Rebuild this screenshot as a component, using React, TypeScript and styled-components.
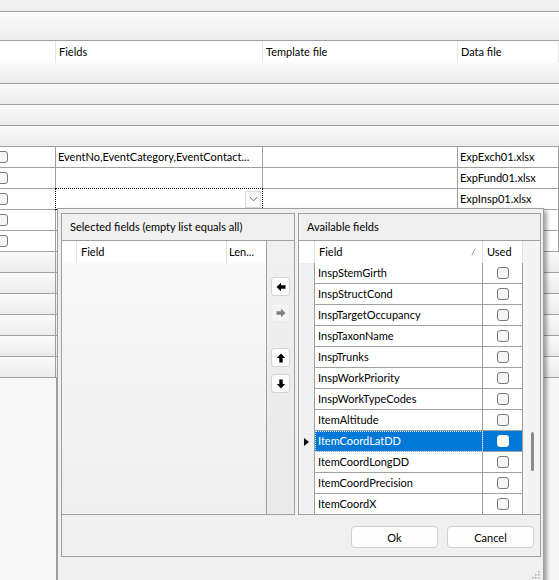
import styled, { createGlobalStyle } from 'styled-components'

const GlobalStyle = createGlobalStyle`
  html, body {
    margin: 0;
    padding: 0;
  }
  body {
    background: #f7f7f7;
    font-family: Lato, 'Segoe UI', 'Liberation Sans', sans-serif;
    font-size: 11px;
    color: #000;
  }
  * {
    box-sizing: border-box;
  }
`

const LINE = '#a0a0a0'

const Page = styled.div`
  position: relative;
  width: 559px;
  height: 580px;
  overflow: hidden;
  display: flex;
  flex-direction: column;
`

const TopBand = styled.div`
  height: 12px;
  flex: none;
  background: #f0f0f0;
  border-bottom: 1px solid ${LINE};
`

const Toolbar = styled.div`
  height: 29px;
  flex: none;
  background: linear-gradient(#fbfbfb, #ededed);
  border-bottom: 1px solid ${LINE};
`

const HeaderRow = styled.div`
  height: 22px;
  flex: none;
  display: flex;
  background: #fff;
`

const HeaderCell = styled.div<{ $w?: number }>`
  width: ${p => (p.$w ? `${p.$w}px` : 'auto')};
  flex: ${p => (p.$w ? 'none' : '1')};
  border-right: 1px solid #e4e4e4;
  padding-left: 3px;
  line-height: 22px;
  white-space: nowrap;
`

const GroupRow = styled.div`
  height: 21px;
  flex: none;
  display: flex;
  background: linear-gradient(#fbfbfb, #ebebeb);
  border-bottom: 1px solid ${LINE};
`

const GroupLead = styled.div`
  width: 56px;
  border-right: 1px solid ${LINE};
`

const DataRow = styled.div`
  height: 21px;
  flex: none;
  display: flex;
  background: #fff;
  border-bottom: 1px solid ${LINE};
`

const Cell = styled.div<{ $w?: number }>`
  width: ${p => (p.$w ? `${p.$w}px` : 'auto')};
  flex: ${p => (p.$w ? 'none' : '1')};
  border-right: 1px solid ${LINE};
  padding-left: 2px;
  line-height: 20px;
  white-space: nowrap;
  overflow: hidden;
  display: flex;
  align-items: center;
`

const CheckCell = styled(Cell)`
  padding-left: 0;
`

const Check = styled.span<{ $on?: boolean }>`
  display: block;
  flex: none;
  width: 12px;
  height: 12px;
  border-radius: 3px;
  border: 1px solid ${p => (p.$on ? '#fff' : '#7a7a7a')};
  background: ${p => (p.$on ? '#fff' : '#f6f6f6')};
`

const LeadCheck = styled(Check)`
  margin-left: -4px;
`

const ComboCell = styled.div`
  width: 208px;
  flex: none;
  border: 1px dotted #000;
  margin: -1px 0 -1px -1px;
  background: #fff;
  display: flex;
  justify-content: flex-end;
  align-items: center;
  padding-right: 1px;
`

const ComboButton = styled.div`
  width: 16px;
  height: 17px;
  border: 1px solid #dcdcdc;
  background: #fafafa;
  display: flex;
  align-items: center;
  justify-content: center;
`

const Filler = styled.div`
  flex: 1;
  display: flex;
`

const FillerLead = styled.div`
  width: 57px;
  border-right: 1px solid ${LINE};
  background: #f8f8f8;
`

/* dropdown editor hanging under the Fields cell */
const Popup = styled.div`
  position: absolute;
  top: 208px;
  left: 57px;
  width: 487px;
  height: 374px;
  background: #f0f0f0;
  border: 1px solid ${LINE};
  box-shadow: 3px 3px 4px rgba(0, 0, 0, 0.35);
  padding: 4px 2px 0 3px;
  display: flex;
  flex-direction: column;
`

const PanelsRow = styled.div`
  height: 302px;
  flex: none;
  display: flex;
  gap: 3px;
`

const Panel = styled.div<{ $w?: number }>`
  width: ${p => (p.$w ? `${p.$w}px` : 'auto')};
  flex: ${p => (p.$w ? 'none' : '1')};
  border: 1px solid ${LINE};
  display: flex;
  flex-direction: column;
  min-width: 0;
`

const PanelTitle = styled.div`
  height: 26px;
  flex: none;
  line-height: 26px;
  padding-left: 8px;
  white-space: nowrap;
`

const PanelBody = styled.div`
  flex: 1;
  display: flex;
  border-top: 1px solid ${LINE};
  overflow: hidden;
`

const SelectedGrid = styled.div`
  width: 205px;
  flex: none;
  border-right: 1px solid ${LINE};
  display: flex;
  flex-direction: column;
  background: linear-gradient(#fafafa, #efefef);
`

const GridHead = styled.div`
  height: 22px;
  flex: none;
  display: flex;
  background: #fff;
`

const GridHeadCell = styled.div<{ $w?: number }>`
  width: ${p => (p.$w ? `${p.$w}px` : 'auto')};
  flex: ${p => (p.$w ? 'none' : '1')};
  border-right: 1px solid #e2e2e2;
  padding-left: 4px;
  line-height: 22px;
  white-space: nowrap;
  display: flex;
  align-items: center;
  justify-content: space-between;
  padding-right: 6px;
`

const LenHeadCell = styled(GridHeadCell)`
  border-right: none;
  padding-left: 2px;
`

const MoveStrip = styled.div`
  flex: 1;
  background: linear-gradient(#f0f0f0, #e9e9e9);
  display: flex;
  flex-direction: column;
  align-items: center;
  padding-top: 36px;
`

const MoveButton = styled.div<{ $off?: boolean; $gap: number }>`
  width: 19px;
  height: 19px;
  margin-bottom: ${p => p.$gap}px;
  border: 1px solid ${p => (p.$off ? '#ebebeb' : '#d3d3d3')};
  border-radius: 3px;
  background: ${p => (p.$off ? '#f4f4f4' : '#fff')};
  display: flex;
  align-items: center;
  justify-content: center;
`

const AvailGrid = styled.div`
  flex: 1;
  display: flex;
`

const AvailRows = styled.div`
  width: 224px;
  flex: none;
  display: flex;
  flex-direction: column;
`

const FieldRow = styled.div`
  height: 21px;
  flex: none;
  display: flex;
`

const RowHead = styled.div<{ $head?: boolean }>`
  width: 16px;
  flex: none;
  border-right: 1px solid ${p => (p.$head ? '#e2e2e2' : LINE)};
  background: ${p => (p.$head ? '#fff' : '#f0f0f0')};
  display: flex;
  align-items: center;
  padding-left: 5px;
`

const Pointer = styled.span`
  width: 0;
  height: 0;
  border-left: 5px solid #000;
  border-top: 4px solid transparent;
  border-bottom: 4px solid transparent;
`

const FieldCell = styled.div<{ $sel?: boolean }>`
  width: 168px;
  flex: none;
  border-right: 1px solid ${LINE};
  border-bottom: 1px solid ${LINE};
  background: ${p => (p.$sel ? '#0078d7' : '#fff')};
  color: ${p => (p.$sel ? '#fff' : '#000')};
  padding-left: 3px;
  line-height: 19px;
  white-space: nowrap;
  outline: ${p => (p.$sel ? '1px dotted #d6e8f8' : 'none')};
  outline-offset: -1px;
`

const UsedCell = styled.div<{ $sel?: boolean }>`
  width: 40px;
  flex: none;
  border-right: 1px solid ${LINE};
  border-bottom: 1px solid ${LINE};
  background: ${p => (p.$sel ? '#0078d7' : '#fff')};
  display: flex;
  align-items: center;
  justify-content: center;
`

const HeadRow = styled.div`
  height: 22px;
  flex: none;
  display: flex;
  background: #fff;
`

const ScrollTrack = styled.div`
  flex: 1;
  background: #f4f4f4;
  padding: 191px 0 0 8px;
`

const ScrollThumb = styled.div`
  width: 3px;
  height: 39px;
  border-radius: 2px;
  background: #8a8a8a;
`

const ButtonBar = styled.div`
  height: 42px;
  flex: none;
  border: 1px solid ${LINE};
  border-top: none;
  display: flex;
  justify-content: flex-end;
  gap: 9px;
  padding: 11px 6px 0 0;
`

const DialogButton = styled.button`
  width: 87px;
  height: 22px;
  border: 1px solid #d0d0d0;
  border-radius: 4px;
  background: #fdfdfd;
  font: inherit;
  color: #000;
  padding: 0;
`

const PopupFoot = styled.div`
  flex: 1;
  display: flex;
  justify-content: flex-end;
  align-items: flex-start;
  padding: 13px 1px 0 0;
`

const fields = [
  'InspStemGirth',
  'InspStructCond',
  'InspTargetOccupancy',
  'InspTaxonName',
  'InspTrunks',
  'InspWorkPriority',
  'InspWorkTypeCodes',
  'ItemAltitude',
  'ItemCoordLatDD',
  'ItemCoordLongDD',
  'ItemCoordPrecision',
  'ItemCoordX',
]
const selectedField = 'ItemCoordLatDD'

const Arrow = ({ dir, color = '#000' }: { dir: 'left' | 'right' | 'up' | 'down'; color?: string }) => {
  const rot = { left: 0, up: 90, right: 180, down: 270 }[dir]
  return (
    <svg width="10" height="10" viewBox="0 0 10 10">
      <polygon
        points="0.5,5 5,0.8 5,3.3 9.5,3.3 9.5,6.7 5,6.7 5,9.2"
        fill={color}
        transform={`rotate(${rot} 5 5)`}
      />
    </svg>
  )
}

const Chevron = () => (
  <svg width="9" height="6" viewBox="0 0 9 6">
    <polyline points="0.5,0.8 4.5,4.8 8.5,0.8" fill="none" stroke="#6a6a6a" strokeWidth="1" />
  </svg>
)

const SortMark = () => (
  <svg width="5" height="8" viewBox="0 0 5 8">
    <line x1="4" y1="0.5" x2="1" y2="7.5" stroke="#9a9a9a" strokeWidth="1" />
  </svg>
)

const SizeGrip = () => (
  <svg width="9" height="9" viewBox="0 0 9 9">
    {[
      [7, 1],
      [4, 4],
      [7, 4],
      [1, 7],
      [4, 7],
      [7, 7],
    ].map(([x, y]) => (
      <rect key={`${x}-${y}`} x={x} y={y} width="1.5" height="1.5" fill="#a8a8a8" />
    ))}
  </svg>
)

export default function App() {
  return (
    <>
      <GlobalStyle />
      <Page>
        <TopBand />
        <Toolbar />
        <HeaderRow>
          <HeaderCell $w={56} />
          <HeaderCell $w={207}>Fields</HeaderCell>
          <HeaderCell $w={195}>Template file</HeaderCell>
          <HeaderCell>Data file</HeaderCell>
        </HeaderRow>
        <GroupRow />
        <GroupRow />
        <GroupRow />
        <GroupRow />
        <DataRow>
          <CheckCell $w={56}>
            <LeadCheck />
          </CheckCell>
          <Cell $w={207}>EventNo,EventCategory,EventContact...</Cell>
          <Cell $w={195} />
          <Cell>ExpExch01.xlsx</Cell>
        </DataRow>
        <DataRow>
          <CheckCell $w={56}>
            <LeadCheck />
          </CheckCell>
          <Cell $w={207} />
          <Cell $w={195} />
          <Cell>ExpFund01.xlsx</Cell>
        </DataRow>
        <DataRow>
          <CheckCell $w={56}>
            <LeadCheck />
          </CheckCell>
          <ComboCell>
            <ComboButton>
              <Chevron />
            </ComboButton>
          </ComboCell>
          <Cell $w={195} />
          <Cell>ExpInsp01.xlsx</Cell>
        </DataRow>
        <DataRow>
          <CheckCell $w={56}>
            <LeadCheck />
          </CheckCell>
          <Cell $w={207} />
          <Cell $w={195} />
          <Cell />
        </DataRow>
        <DataRow>
          <CheckCell $w={56}>
            <LeadCheck />
          </CheckCell>
          <Cell $w={207} />
          <Cell $w={195} />
          <Cell />
        </DataRow>
        {[0, 1, 2, 3, 4, 5].map(i => (
          <GroupRow key={i}>
            <GroupLead />
          </GroupRow>
        ))}
        <Filler>
          <FillerLead />
        </Filler>

        <Popup>
          <PanelsRow>
            <Panel $w={234}>
              <PanelTitle>Selected fields (empty list equals all)</PanelTitle>
              <PanelBody>
                <SelectedGrid>
                  <GridHead>
                    <GridHeadCell $w={15} />
                    <GridHeadCell $w={150}>Field</GridHeadCell>
                    <LenHeadCell>Len...</LenHeadCell>
                  </GridHead>
                </SelectedGrid>
                <MoveStrip>
                  <MoveButton $gap={7}>
                    <Arrow dir="left" />
                  </MoveButton>
                  <MoveButton $off $gap={26}>
                    <Arrow dir="right" color="#808080" />
                  </MoveButton>
                  <MoveButton $gap={7}>
                    <Arrow dir="up" />
                  </MoveButton>
                  <MoveButton $gap={0}>
                    <Arrow dir="down" />
                  </MoveButton>
                </MoveStrip>
              </PanelBody>
            </Panel>
            <Panel>
              <PanelTitle>Available fields</PanelTitle>
              <PanelBody>
                <AvailGrid>
                  <AvailRows>
                    <HeadRow>
                      <RowHead $head />
                      <GridHeadCell $w={168}>
                        Field
                        <SortMark />
                      </GridHeadCell>
                      <GridHeadCell $w={40}>Used</GridHeadCell>
                    </HeadRow>
                    {fields.map(name => {
                      const sel = name === selectedField
                      return (
                        <FieldRow key={name}>
                          <RowHead>{sel && <Pointer />}</RowHead>
                          <FieldCell $sel={sel}>{name}</FieldCell>
                          <UsedCell $sel={sel}>
                            <Check $on={sel} />
                          </UsedCell>
                        </FieldRow>
                      )
                    })}
                  </AvailRows>
                  <ScrollTrack>
                    <ScrollThumb />
                  </ScrollTrack>
                </AvailGrid>
              </PanelBody>
            </Panel>
          </PanelsRow>
          <ButtonBar>
            <DialogButton>Ok</DialogButton>
            <DialogButton>Cancel</DialogButton>
          </ButtonBar>
          <PopupFoot>
            <SizeGrip />
          </PopupFoot>
        </Popup>
      </Page>
    </>
  )
}
